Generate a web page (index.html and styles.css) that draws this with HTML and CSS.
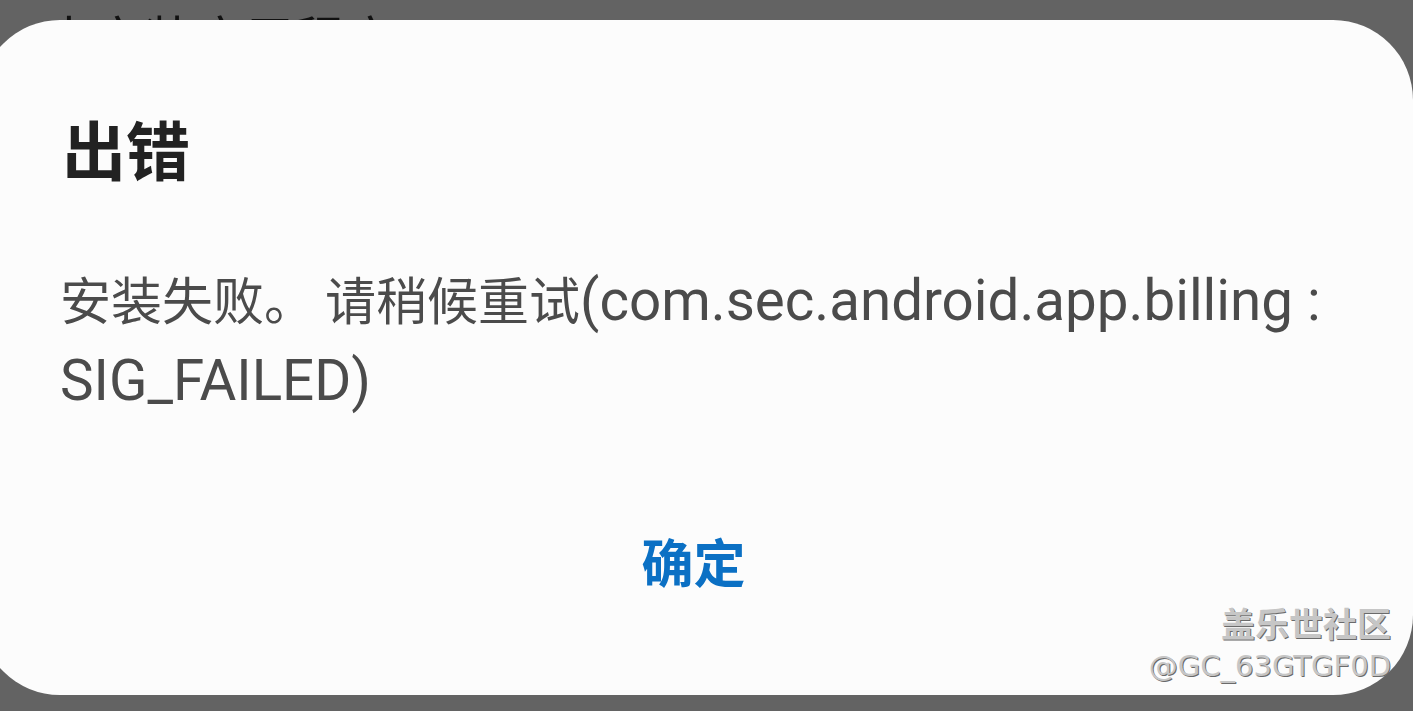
FILE: index.html
```html
<!DOCTYPE html>
<html lang="zh-CN">
<head>
<meta charset="utf-8">
<title>出错</title>
<link rel="stylesheet" href="styles.css">
</head>
<body>
<div class="screen">
  <div class="behind">未安装应用程序</div>
  <div class="dialog">
    <h1 class="title">出错</h1>
    <p class="message"><span class="cjk">安装失败<span class="stop">。</span>请稍候重试</span>(com.sec.android.app.billing : SIG_FAILED)</p>
    <div class="actions"><button class="ok">确定</button></div>
  </div>
  <div class="watermark">
    <div class="wm-name">盖乐世社区</div>
    <div class="wm-user">@GC_63GTGF0D</div>
  </div>
</div>
</body>
</html>
```
FILE: styles.css
```css
html, body {
  margin: 0;
  padding: 0;
  height: 100%;
}
body {
  background: #636363;
  overflow: hidden;
  font-family: Roboto, "Noto Sans CJK SC", sans-serif;
}
.screen {
  position: relative;
  width: 1413px;
  height: 711px;
  overflow: hidden;
}
.behind {
  padding: 6px 0 0 44px;
  font-family: "Noto Sans CJK SC", sans-serif;
  font-size: 50px;
  line-height: 60px;
  color: #111;
}
.dialog {
  position: absolute;
  left: -20px;
  top: 20px;
  width: 1433px;
  height: 675px;
  box-sizing: border-box;
  background: #fcfcfc;
  border-radius: 80px;
  padding: 87px 70px 0 82px;
  display: flex;
  flex-direction: column;
}
.title {
  margin: 0;
  font-family: "Noto Sans CJK SC", sans-serif;
  font-weight: 700;
  font-size: 64px;
  line-height: 80px;
  color: #222;
}
.message {
  margin: 71px 0 0 -2px;
  font-family: Roboto, sans-serif;
  font-size: 56.5px;
  line-height: 80px;
  color: #4b4b4b;
}
.cjk {
  font-family: "Noto Sans CJK SC", sans-serif;
  font-size: 51px;
}
.stop {
  margin-right: 10px;
}
.actions {
  display: flex;
  justify-content: center;
  margin-top: 108px;
  padding-right: 18px;
}
.ok {
  border: 0;
  background: none;
  padding: 0;
  font-family: "Noto Sans CJK SC", sans-serif;
  font-weight: 700;
  font-size: 52px;
  line-height: 64px;
  color: #0b70c4;
}
.watermark {
  position: absolute;
  right: 22px;
  top: 600px;
  text-align: right;
  color: #c6c6c6;
}
.wm-name {
  font-family: "Noto Sans CJK SC", sans-serif;
  font-weight: 700;
  font-size: 34px;
  line-height: 46px;
  text-shadow: 1px 1px 0 #6a6a6a;
}
.wm-user {
  font-family: "DejaVu Sans", sans-serif;
  font-size: 29px;
  line-height: 40px;
  text-shadow: 1px 1px 0 #6a6a6a;
}
```
